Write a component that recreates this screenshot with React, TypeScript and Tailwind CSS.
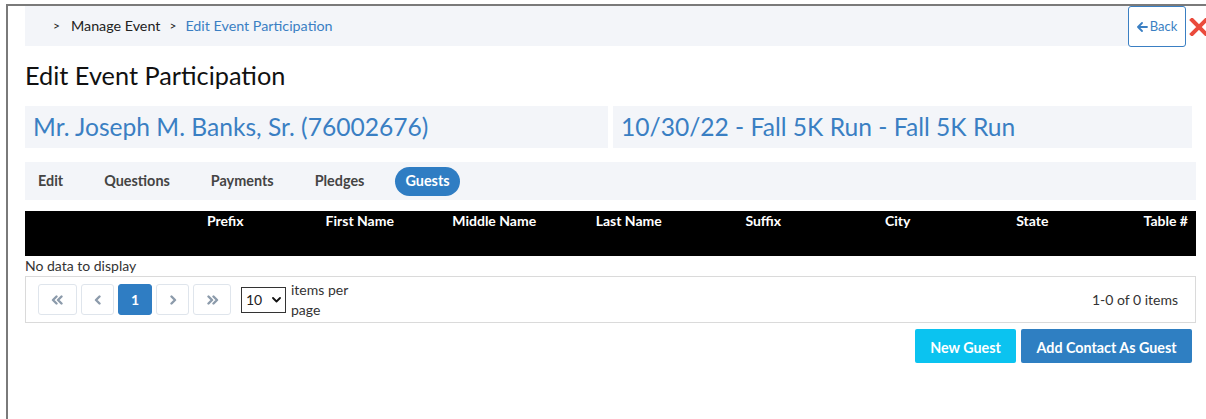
import React from "react";

const blue = "text-[#3a7fc3]";

function Chevron({ dir, double }: { dir: "left" | "right"; double?: boolean }) {
  const one = dir === "left" ? "M5.5 1.5 L2 5 L5.5 8.5" : "M2.5 1.5 L6 5 L2.5 8.5";
  const two = dir === "left" ? "M10.5 1.5 L7 5 L10.5 8.5" : "M7.5 1.5 L11 5 L7.5 8.5";
  return (
    <svg width={double ? 13 : 8} height="10" viewBox={double ? "0 0 13 10" : "0 0 8 10"} fill="none" stroke="#8c9bab" strokeWidth="2.4" strokeLinecap="round" strokeLinejoin="round">
      <path d={one} />
      {double && <path d={two} />}
    </svg>
  );
}

function PagerButton({ children, w, active }: { children: React.ReactNode; w: string; active?: boolean }) {
  return (
    <div
      className={`${w} h-[31px] flex items-center justify-center rounded-[3px] border ${
        active ? "bg-[#2f7dc3] border-[#2f7dc3] text-white font-bold text-[14px]" : "bg-white border-[#dfe5ec]"
      }`}
    >
      {children}
    </div>
  );
}

const columns = ["Prefix", "First Name", "Middle Name", "Last Name", "Suffix", "City", "State"];

export default function App() {
  return (
    <div className="w-[1206px] h-[419px] overflow-hidden bg-white font-['Lato','Noto_Sans',sans-serif] text-[#222]">
      <div className="mt-[4px] ml-[6px] h-[415px] border-t-2 border-l-2 border-[#7a7a7a] pl-[17px]">
        <div className="w-[1171px]">
          {/* breadcrumb row */}
          <div className="flex items-stretch w-[1200px]">
            <div className="w-[1103px] h-[40px] bg-[#f3f5f9] flex items-center pl-[28px] text-[14.3px]">
              <span className="text-[#222] text-[12px] mr-[11px]">&gt;</span>
              <span>Manage Event</span>
              <span className="text-[#222] text-[12px] ml-[9px] mr-[9px]">&gt;</span>
              <span className={blue}>Edit Event Participation</span>
            </div>
            <div className="w-[58px] h-[41px] border border-[#3a7fc3] rounded-[3px] flex items-center justify-center gap-[2px] text-[13px] text-[#3a7fc3] bg-white">
              <svg width="11" height="10" viewBox="0 0 11 10" fill="none" stroke="#3a7fc3" strokeWidth="1.8" strokeLinecap="round" strokeLinejoin="round">
                <path d="M10 5 H1.5 M5 1 L1 5 L5 9" />
              </svg>
              <span>Back</span>
            </div>
            <div className="ml-[3px] pt-[12px]">
              <svg width="20" height="18" viewBox="0 0 20 18" stroke="#ea4a3c" strokeWidth="4" strokeLinecap="square">
                <path d="M3 2 L17 16 M17 2 L3 16" />
              </svg>
            </div>
          </div>

          {/* page title */}
          <h1 className="mt-[13px] text-[25.3px] leading-[30px] text-[#111]">Edit Event Participation</h1>

          {/* contact / event summary */}
          <div className="mt-[16px] flex gap-[5px] w-[1167px]">
            <div className={`w-[583px] h-[42px] bg-[#f3f5f9] flex items-center px-[8px] text-[24.6px] ${blue}`}>
              Mr. Joseph M. Banks, Sr. (76002676)
            </div>
            <div className={`flex-1 h-[42px] bg-[#f3f5f9] flex items-center px-[8px] text-[24.6px] ${blue}`}>
              10/30/22 - Fall 5K Run - Fall 5K Run
            </div>
          </div>

          {/* tabs */}
          <div className="mt-[14px] h-[38px] bg-[#f3f5f9] flex items-center gap-[21px] pl-[3px] text-[14.4px] font-bold text-[#444]">
            <span className="px-[10px]">Edit</span>
            <span className="px-[10px]">Questions</span>
            <span className="px-[10px]">Payments</span>
            <span className="px-[10px]">Pledges</span>
            <span className="px-[10px] h-[29px] flex items-center rounded-full bg-[#2f7dc3] text-white">Guests</span>
          </div>

          {/* guests grid */}
          <div className="mt-[11px] h-[45px] bg-black text-white text-[14px] font-bold grid grid-cols-[133px_repeat(7,134.5px)_1fr] leading-[20px]">
            <div />
            {columns.map((c) => (
              <div key={c} className="text-center">{c}</div>
            ))}
            <div className="text-right pr-[8px]">Table #</div>
          </div>
          <div className="text-[14px] leading-[20px] text-[#333]">No data to display</div>

          {/* pager */}
          <div className="h-[47px] border border-[#dadada] flex items-center pl-[12px] pr-[17px] text-[14px] text-[#333]">
            <div className="flex gap-[4px]">
              <PagerButton w="w-[39px]"><Chevron dir="left" double /></PagerButton>
              <PagerButton w="w-[33px]"><Chevron dir="left" /></PagerButton>
              <PagerButton w="w-[34px]" active>1</PagerButton>
              <PagerButton w="w-[33px]"><Chevron dir="right" /></PagerButton>
              <PagerButton w="w-[38px]"><Chevron dir="right" double /></PagerButton>
            </div>
            <div className="ml-[10px] w-[45px] h-[26px] border border-[#333] flex items-center justify-between px-[4px] text-[14px] text-[#222]">
              <span>10</span>
              <svg width="9" height="6" viewBox="0 0 9 6" fill="none" stroke="#111" strokeWidth="1.8" strokeLinecap="round" strokeLinejoin="round">
                <path d="M1 1 L4.5 4.5 L8 1" />
              </svg>
            </div>
            <div className="ml-[5px] leading-[20px] w-[70px]">
              items per
              <br />
              page
            </div>
            <div className="ml-auto">1-0 of 0 items</div>
          </div>

          {/* actions */}
          <div className="mt-[6px] flex justify-end gap-[5px] pr-[4px] text-[14.3px] font-bold text-white">
            <div className="w-[101px] h-[34px] pt-[3px] rounded-[2px] bg-[#0bc3f0] flex items-center justify-center">New Guest</div>
            <div className="w-[171px] h-[34px] pt-[3px] rounded-[2px] bg-[#2f7fc2] flex items-center justify-center">Add Contact As Guest</div>
          </div>
        </div>
      </div>
    </div>
  );
}
